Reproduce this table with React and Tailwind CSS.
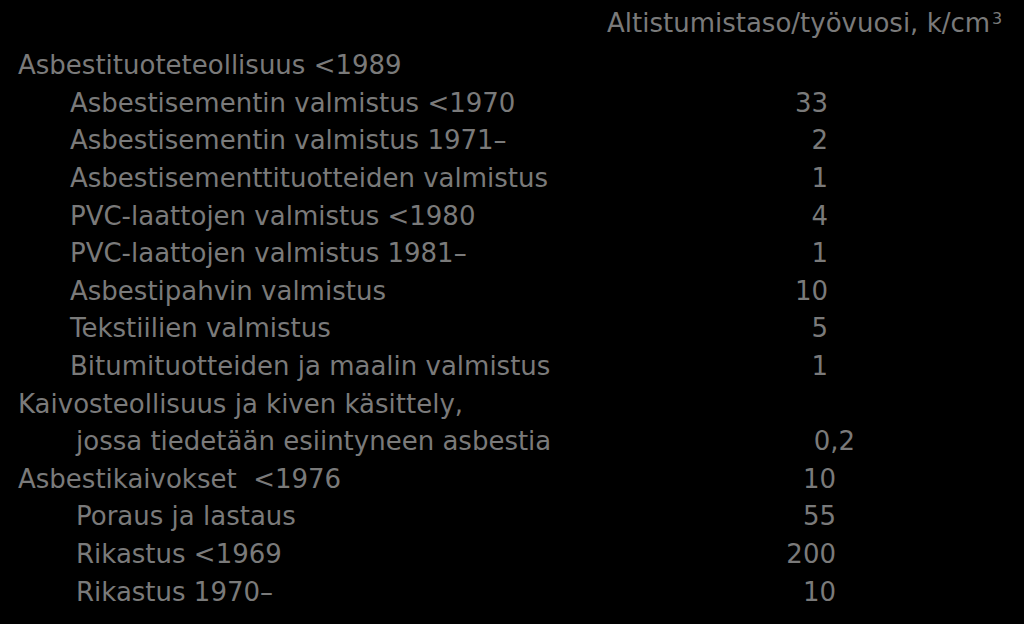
const rows = [
  { label: "Asbestituoteteollisuus <1989", indent: 0, value: "", pr: "pr-[28px]" },
  { label: "Asbestisementin valmistus <1970", indent: 1, value: "33", pr: "pr-[28px]" },
  { label: "Asbestisementin valmistus 1971–", indent: 1, value: "2", pr: "pr-[28px]" },
  { label: "Asbestisementtituotteiden valmistus", indent: 1, value: "1", pr: "pr-[28px]" },
  { label: "PVC-laattojen valmistus <1980", indent: 1, value: "4", pr: "pr-[28px]" },
  { label: "PVC-laattojen valmistus 1981–", indent: 1, value: "1", pr: "pr-[28px]" },
  { label: "Asbestipahvin valmistus", indent: 1, value: "10", pr: "pr-[28px]" },
  { label: "Tekstiilien valmistus", indent: 1, value: "5", pr: "pr-[28px]" },
  { label: "Bitumituotteiden ja maalin valmistus", indent: 1, value: "1", pr: "pr-[28px]" },
  { label: "Kaivosteollisuus ja kiven käsittely,", indent: 0, value: "", pr: "pr-[28px]" },
  { label: "jossa tiedetään esiintyneen asbestia", indent: 2, value: "0,2", pr: "pr-[1px]" },
  { label: "Asbestikaivokset  <1976", indent: 0, value: "10", pr: "pr-[20px]" },
  { label: "Poraus ja lastaus", indent: 3, value: "55", pr: "pr-[20px]" },
  { label: "Rikastus <1969", indent: 3, value: "200", pr: "pr-[20px]" },
  { label: "Rikastus 1970–", indent: 3, value: "10", pr: "pr-[20px]" },
];

const indents = ["pl-[18px]", "pl-[70px]", "pl-[76px]", "pl-[76px]"];

export default function App() {
  return (
    <div className="w-[1024px] h-[624px] overflow-hidden bg-black text-[#7a7a7a] [font-family:'DejaVu_Sans',Verdana,sans-serif]">
      <div className="h-[47px] flex items-center pl-[607px] text-[26px] whitespace-nowrap">
        <span>
          Altistumistaso/työvuosi, k/cm<sup className="text-[16px] ml-[2px]">3</sup>
        </span>
      </div>
      <div className="w-[856px]">
        {rows.map((r, i) => (
          <div key={i} className={`h-[37.6px] flex items-center text-[26px] whitespace-pre ${r.pr}`}>
            <span className={indents[r.indent]}>{r.label}</span>
            <span className="ml-auto">{r.value}</span>
          </div>
        ))}
      </div>
    </div>
  );
}
